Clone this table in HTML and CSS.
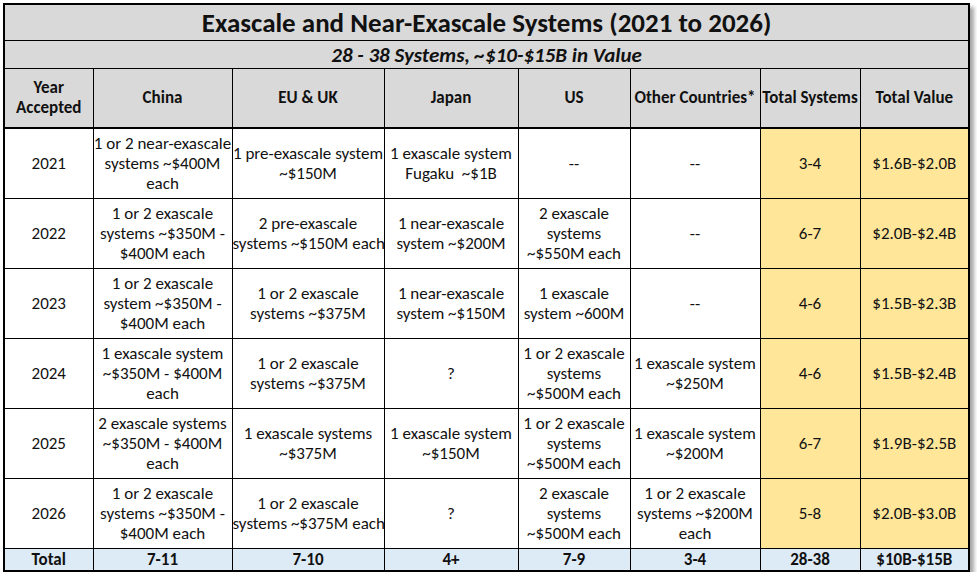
FILE: index.html
```html
<!DOCTYPE html>
<html>
<head>
<meta charset="utf-8">
<link rel="stylesheet" href="styles.css">
</head>
<body>
<div class="wrap">
<table class="grid">
  <colgroup>
    <col class="c1"><col class="c2"><col class="c3"><col class="c4"><col class="c5"><col class="c6"><col class="c7"><col class="c8">
  </colgroup>
  <tr class="title"><td colspan="8">Exascale and Near-Exascale Systems (2021 to 2026)</td></tr>
  <tr class="sub"><td colspan="8">28 - 38 Systems, ~$10-$15B in Value</td></tr>
  <tr class="head">
    <td>Year<br>Accepted</td><td>China</td><td>EU &amp; UK</td><td>Japan</td><td>US</td><td>Other Countries*</td><td>Total Systems</td><td>Total Value</td>
  </tr>
  <tr class="row">
    <td>2021</td><td>1 or 2 near-exascale<br>systems ~$400M<br>each</td><td>1 pre-exascale system<br>~$150M</td><td>1 exascale system<br>Fugaku&nbsp; ~$1B</td><td>--</td><td>--</td><td class="y">3-4</td><td class="y">$1.6B-$2.0B</td>
  </tr>
  <tr class="row">
    <td>2022</td><td>1 or 2 exascale<br>systems ~$350M -<br>$400M each</td><td>2 pre-exascale<br>systems ~$150M each</td><td>1 near-exascale<br>system ~$200M</td><td>2 exascale<br>systems<br>~$550M each</td><td>--</td><td class="y">6-7</td><td class="y">$2.0B-$2.4B</td>
  </tr>
  <tr class="row">
    <td>2023</td><td>1 or 2 exascale<br>system ~$350M -<br>$400M each</td><td>1 or 2 exascale<br>systems ~$375M</td><td>1 near-exascale<br>system ~$150M</td><td>1 exascale<br>system ~600M</td><td>--</td><td class="y">4-6</td><td class="y">$1.5B-$2.3B</td>
  </tr>
  <tr class="row">
    <td>2024</td><td>1 exascale system<br>~$350M - $400M<br>each</td><td>1 or 2 exascale<br>systems ~$375M</td><td>?</td><td>1 or 2 exascale<br>systems<br>~$500M each</td><td>1 exascale system<br>~$250M</td><td class="y">4-6</td><td class="y">$1.5B-$2.4B</td>
  </tr>
  <tr class="row">
    <td>2025</td><td>2 exascale systems<br>~$350M - $400M<br>each</td><td>1 exascale systems<br>~$375M</td><td>1 exascale system<br>~$150M</td><td>1 or 2 exascale<br>systems<br>~$500M each</td><td>1 exascale system<br>~$200M</td><td class="y">6-7</td><td class="y">$1.9B-$2.5B</td>
  </tr>
  <tr class="row">
    <td>2026</td><td>1 or 2 exascale<br>systems ~$350M -<br>$400M each</td><td>1 or 2 exascale<br>systems ~$375M each</td><td>?</td><td>2 exascale<br>systems<br>~$500M each</td><td>1 or 2 exascale<br>systems ~$200M<br>each</td><td class="y">5-8</td><td class="y">$2.0B-$3.0B</td>
  </tr>
  <tr class="total">
    <td>Total</td><td>7-11</td><td>7-10</td><td>4+</td><td>7-9</td><td>3-4</td><td>28-38</td><td>$10B-$15B</td>
  </tr>
</table>
</div>
</body>
</html>
```

FILE: styles.css
```css
html, body {
  margin: 0;
  padding: 0;
  background: #ffffff;
}
.wrap {
  padding: 3px 0 0 3px;
}
.grid {
  border-collapse: collapse;
  table-layout: fixed;
  width: 965px;
  font-family: Carlito, Calibri, Lato, sans-serif;
  color: #111;
  box-shadow: 4px 4px 4px rgba(0,0,0,0.35);
  border: 2px solid #000;
}
.c1 { width: 89px; }
.c2 { width: 139px; }
.c3 { width: 152px; }
.c4 { width: 134px; }
.c5 { width: 112px; }
.c6 { width: 130px; }
.c7 { width: 100px; }
.c8 { width: 109px; }
.grid td {
  border: 1px solid #000;
  text-align: center;
  vertical-align: middle;
  padding: 0;
  white-space: nowrap;
  overflow: hidden;
}
.title td {
  background: #d9d9d9;
  height: 35px;
  font-size: 27px;
  font-weight: bold;
  line-height: 30px;
}
.sub td {
  background: #d9d9d9;
  height: 27px;
  font-size: 21px;
  font-weight: bold;
  font-style: italic;
  line-height: 24px;
}
.head td {
  background: #d9d9d9;
  height: 58px;
  font-size: 17px;
  font-weight: bold;
  line-height: 20px;
  border-bottom: 2px solid #000;
}
.row td {
  height: 69px;
  font-size: 17px;
  line-height: 20px;
  background: #fff;
}
.row td.y {
  background: #ffe699;
}
.total td {
  background: #ddebf7;
  height: 21px;
  font-size: 17px;
  font-weight: bold;
  line-height: 20px;
}
```
